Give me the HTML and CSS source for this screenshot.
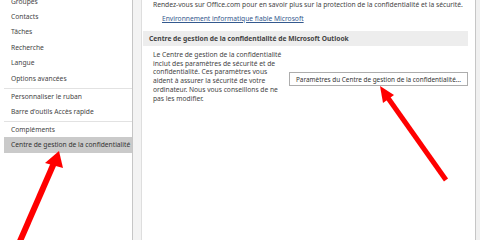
FILE: index.html
```html
<!DOCTYPE html>
<html lang="fr">
<head>
  <meta charset="UTF-8" />
  <title>Options Outlook</title>
  <link rel="stylesheet" href="styles.css">
</head>
<body>
  <div class="window">
    <nav class="sidebar">
      <ul class="group first">
        <li>Groupes</li>
        <li>Contacts</li>
        <li>Tâches</li>
        <li>Recherche</li>
        <li>Langue</li>
        <li>Options avancées</li>
      </ul>
      <ul class="group">
        <li>Personnaliser le ruban</li>
        <li>Barre d'outils Accès rapide</li>
      </ul>
      <ul class="group">
        <li>Compléments</li>
        <li class="active">Centre de gestion de la confidentialité</li>
      </ul>
    </nav>
    <div class="gutter"></div>
    <main class="content">
      <p class="intro">Rendez-vous sur Office.com pour en savoir plus sur la protection de la confidentialité et la sécurité.</p>
      <a class="link" href="#">Environnement informatique fiable Microsoft</a>
      <h2 class="section-title">Centre de gestion de la confidentialité de Microsoft Outlook</h2>
      <div class="section-body">
        <p class="desc">Le Centre de gestion de la confidentialité<br>inclut des paramètres de sécurité et de<br>confidentialité. Ces paramètres vous<br>aident à assurer la sécurité de votre<br>ordinateur. Nous vous conseillons de ne<br>pas les modifier.</p>
        <button class="settings-btn">Paramètres du Centre de gestion de la confidentialité...</button>
      </div>
    </main>
    <div class="edge"></div>
  </div>

  <svg class="arrows" width="480" height="240" viewBox="0 0 480 240">
    <line x1="17" y1="248" x2="54" y2="163" stroke="#f00" stroke-width="6" />
    <polygon points="59,151 63,168 45,163" fill="#f00" />
    <line x1="446" y1="180" x2="388" y2="98" stroke="#f00" stroke-width="5" />
    <polygon points="380,86 394,95 383,103" fill="#f00" />
  </svg>
</body>
</html>
```

FILE: styles.css
```css
* {
  margin: 0;
  padding: 0;
  box-sizing: border-box;
}
body {
  width: 480px;
  height: 240px;
  overflow: hidden;
  background-color: white;
  color: #444;
  font-family: "Noto Sans", "Open Sans", sans-serif;
  font-size: 6.7px;
}
.window {
  display: flex;
  height: 240px;
}
.sidebar {
  flex-shrink: 0;
  width: 133px;
  padding-left: 4px;
  border-right: 1px solid #c6c6c6;
  background-color: white;
}
.group {
  list-style: none;
  border-bottom: 1px solid #e2e2e2;
  padding-bottom: 1px;
}
.group:last-child {
  border-bottom: none;
}
.group.first {
  margin-top: -6px;
}
.group li {
  height: 15.6px;
  line-height: 15.6px;
  padding-left: 7px;
  white-space: nowrap;
}
.group.first li:first-child {
  height: 14.6px;
}
.group li.active {
  background-color: #cacaca;
  color: #333;
}
.gutter {
  flex-shrink: 0;
  width: 9px;
  background-color: #f3f3f3;
  border-right: 1px solid #dedede;
}
.content {
  flex: 1;
  min-width: 0;
  padding: 0 7px 0 1px;
}
.intro {
  padding-left: 10px;
  line-height: 9px;
  white-space: nowrap;
}
.link {
  display: inline-block;
  margin: 5px 0 0 19px;
  color: #34598e;
  line-height: 9px;
}
.section-title {
  margin-top: 8px;
  height: 15px;
  line-height: 15px;
  padding-left: 6px;
  background-color: #ededed;
  font-size: 6.7px;
  font-weight: bold;
  color: #444;
}
.section-body {
  display: flex;
  justify-content: space-between;
  padding-left: 10px;
  margin-top: 5px;
}
.desc {
  line-height: 8.7px;
}
.settings-btn {
  align-self: flex-start;
  margin-top: 21px;
  width: 179px;
  height: 14px;
  padding-left: 6px;
  text-align: left;
  background-color: white;
  border: 1px solid #adadad;
  color: #333;
  font-family: inherit;
  font-size: 6.4px;
  white-space: nowrap;
}
.edge {
  flex-shrink: 0;
  width: 5px;
  background-color: #f0f0f0;
  border-left: 1px solid #c6c6c6;
}
.arrows {
  position: absolute;
  top: 0;
  left: 0;
  pointer-events: none;
}
```
